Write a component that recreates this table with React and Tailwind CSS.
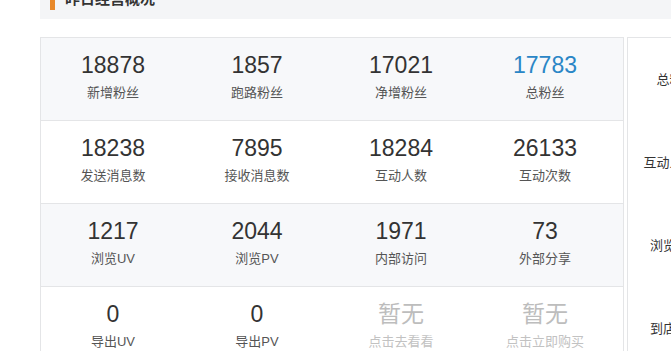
const rows = [
  [
    { value: '18878', label: '新增粉丝' },
    { value: '1857', label: '跑路粉丝' },
    { value: '17021', label: '净增粉丝' },
    { value: '17783', label: '总粉丝', blue: true },
  ],
  [
    { value: '18238', label: '发送消息数' },
    { value: '7895', label: '接收消息数' },
    { value: '18284', label: '互动人数' },
    { value: '26133', label: '互动次数' },
  ],
  [
    { value: '1217', label: '浏览UV' },
    { value: '2044', label: '浏览PV' },
    { value: '1971', label: '内部访问' },
    { value: '73', label: '外部分享' },
  ],
  [
    { value: '0', label: '导出UV' },
    { value: '0', label: '导出PV' },
    { value: '暂无', label: '点击去看看', empty: true },
    { value: '暂无', label: '点击立即购买', empty: true },
  ],
];

const sideLabels = ['总粉丝数', '互动人数占比', '浏览转化率', '到店转化率'];

const StatCell = ({ stat }) => {
  let valueColor = 'text-[#333333]';
  if (stat.blue) valueColor = 'text-[#2a86c6]';
  if (stat.empty) valueColor = 'text-[#bdbdbd]';

  return (
    <div className="flex flex-col items-center pt-[13px]">
      <span className={`text-[23px] leading-[28px] ${valueColor}`}>{stat.value}</span>
      <span
        className={`mt-[5px] text-[13px] leading-[18px] ${
          stat.empty ? 'text-[#c2c2c2]' : 'text-[#555555]'
        }`}
      >
        {stat.label}
      </span>
    </div>
  );
};

const App = () => {
  return (
    <div className="w-[671px] h-[351px] overflow-hidden bg-white font-['Liberation_Sans','Noto_Sans_CJK_SC',sans-serif]">
      <div className="ml-[40px] mt-[-21px] h-[40px] bg-[#f4f5f7] flex items-center pl-[10px]">
        <div className="w-[5px] h-[22px] bg-[#e8892b]" />
        <span className="ml-[10px] text-[15px] font-bold text-[#333333]">昨日经营概况</span>
      </div>

      <div className="mt-[18px] ml-[40px] flex">
        <div className="w-[584px] shrink-0 border-l border-t border-r border-[#e4e5e7]">
          {rows.map((row, i) => (
            <div
              key={i}
              className={`h-[83px] border-b border-[#e4e5e7] ${
                i % 2 === 0 ? 'bg-[#f7f8fa]' : 'bg-white'
              }`}
            >
              <div className="w-[576px] grid grid-cols-4">
                {row.map((stat) => (
                  <StatCell key={stat.label} stat={stat} />
                ))}
              </div>
            </div>
          ))}
        </div>

        <div className="ml-[3px] w-[110px] shrink-0 border-l border-t border-[#e4e5e7] bg-white">
          {sideLabels.map((label) => (
            <div
              key={label}
              className="h-[83px] flex items-center justify-center text-[13px] text-[#333333] whitespace-nowrap"
            >
              {label}
            </div>
          ))}
        </div>
      </div>
    </div>
  );
};

export default App;
